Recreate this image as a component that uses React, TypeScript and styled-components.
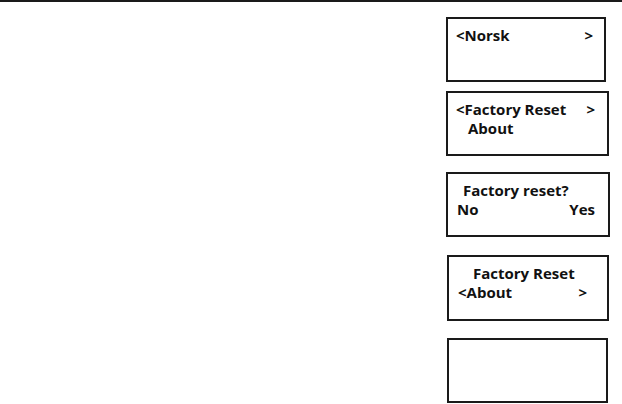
import React from "react";
import styled, { createGlobalStyle } from "styled-components";

const Global = createGlobalStyle`
  html, body { margin: 0; padding: 0; background: #fff; }
  body { font-family: "Open Sans", Lato, "Liberation Sans", sans-serif; }
`;

const Page = styled.div`
  box-sizing: border-box;
  width: 622px;
  height: 404px;
  overflow: hidden;
  background: #fff;
  border-top: 2px solid #1a1a1a;
  display: flex;
  flex-direction: column;
  padding-left: 446px;
`;

const Screen = styled.div<{ $w: number; $mt: number; $h?: number; $ml?: number }>`
  box-sizing: border-box;
  flex: none;
  width: ${(p) => p.$w}px;
  height: ${(p) => p.$h ?? 65}px;
  margin-top: ${(p) => p.$mt}px;
  margin-left: ${(p) => p.$ml ?? 0}px;
  border: 2px solid #1a1a1a;
  padding: 7px 0 0 8px;
  display: flex;
  flex-direction: column;
`;

const Line = styled.div<{ $indent?: number }>`
  display: flex;
  height: 19px;
  line-height: 19px;
  font-size: 15px;
  font-weight: 700;
  color: #111;
  white-space: pre;
  padding-left: ${(p) => p.$indent ?? 0}px;
`;

const Right = styled.span<{ $pr: number }>`
  margin-left: auto;
  margin-right: ${(p) => p.$pr}px;
`;

export default function App() {
  return (
    <>
      <Global />
      <Page>
        <Screen $w={160} $mt={15}>
          <Line>
            &lt;Norsk<Right $pr={11}>&gt;</Right>
          </Line>
        </Screen>
        <Screen $w={163} $mt={9}>
          <Line>
            &lt;Factory Reset<Right $pr={12}>&gt;</Right>
          </Line>
          <Line $indent={12}>About</Line>
        </Screen>
        <Screen $w={164} $mt={16}>
          <Line $indent={7}>Factory reset?</Line>
          <Line $indent={1}>
            No<Right $pr={13}>Yes</Right>
          </Line>
        </Screen>
        <Screen $w={162} $mt={18} $h={66} $ml={1}>
          <Line $indent={16}>Factory Reset</Line>
          <Line $indent={1}>
            &lt;About<Right $pr={20}>&gt;</Right>
          </Line>
        </Screen>
        <Screen $w={161} $mt={17} $ml={1} />
      </Page>
    </>
  );
}
